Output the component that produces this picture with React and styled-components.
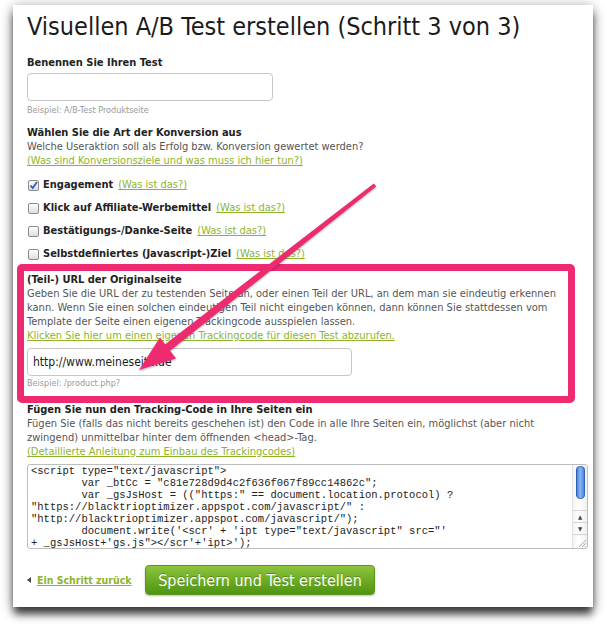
import React from 'react';
import styled, { createGlobalStyle } from 'styled-components';

const SANS = `"DejaVu Sans Condensed", "Liberation Sans", sans-serif`;
const MONO = `"Liberation Mono", "DejaVu Sans Mono", monospace`;
const PINK = '#ee2a70';
const GREEN = '#8db42c';

const GlobalStyle = createGlobalStyle`
  html, body {
    margin: 0;
    padding: 0;
    background: #ffffff;
  }
  body {
    font-family: ${SANS};
  }
`;

const Page = styled.div`
  width: 607px;
  height: 624px;
  overflow: hidden;
  box-sizing: border-box;
  padding: 5px 0 0 13px;
`;

const Sheet = styled.div`
  position: relative;
  width: 580px;
  height: 602px;
  box-sizing: border-box;
  padding: 8px 5px 0 14px;
  background: #ffffff;
  box-shadow:
    0 8px 8px -1px rgba(0, 0, 0, 0.7),
    0 2px 12px rgba(0, 0, 0, 0.4);
`;

const Title = styled.h1`
  margin: 0;
  font-size: 25px;
  line-height: 28px;
  font-weight: normal;
  color: #1b1b1b;
  white-space: nowrap;
`;

const Label = styled.div`
  margin-top: ${p => p.$top || 0}px;
  font-size: 11px;
  line-height: 14px;
  font-weight: bold;
  color: #222;
`;

const Desc = styled.div`
  font-size: 11px;
  line-height: 14px;
  color: #555;
  white-space: nowrap;
`;

const TextLink = styled.a`
  color: ${GREEN};
  text-decoration: underline;
  font-weight: ${p => (p.$bold ? 'bold' : 'normal')};
  cursor: pointer;
`;

const TextInput = styled.input`
  display: block;
  width: ${p => p.$width}px;
  height: 28px;
  margin-top: ${p => p.$top}px;
  box-sizing: border-box;
  border: 1px solid #c6c6c6;
  border-radius: 4px;
  padding: 0 5px;
  font-family: ${SANS};
  font-size: 12px;
  color: #222;
  background: #fff;
  outline: none;
`;

const Hint = styled.div`
  margin-top: ${p => p.$top}px;
  font-size: 9px;
  line-height: 12px;
  color: #9a9a9a;
`;

const CheckList = styled.div`
  margin-top: 10px;
  display: flex;
  flex-direction: column;
  gap: 9px;
`;

const CheckRow = styled.div`
  display: flex;
  align-items: center;
  gap: 4px;
  font-size: 11px;
  line-height: 14px;
  white-space: nowrap;
`;

const CheckName = styled.span`
  font-weight: bold;
  color: #222;
  margin-right: 1px;
`;

const Box = styled.span`
  display: inline-flex;
  align-items: center;
  justify-content: center;
  width: 9px;
  height: 9px;
  margin-left: 1px;
  border: 1px solid #8c8c8c;
  border-radius: 2px;
  background: linear-gradient(#ffffff, #dedede);
`;

const Highlight = styled.section`
  margin: 3px 13px 0 -10px;
  border: 7px solid ${PINK};
  border-radius: 5px;
  padding: 2px 3px 7px 3px;
`;

const CodeBox = styled.div`
  display: flex;
  height: 85px;
  margin-top: 5px;
  box-sizing: border-box;
  border: 1px solid #bdbdbd;
  border-radius: 3px;
  overflow: hidden;
`;

const CodeText = styled.pre`
  flex: 1;
  margin: 0;
  padding: 0 3px;
  overflow: hidden;
  font-family: ${MONO};
  font-size: 10.5px;
  line-height: 12px;
  color: #222;
  tab-size: 8;
`;

const ScrollBar = styled.div`
  width: 14px;
  display: flex;
  flex-direction: column;
  align-items: center;
  background: linear-gradient(90deg, #f4f4f4, #ffffff 40%, #f0f0f0);
  border-left: 1px solid #e2e2e2;
`;

const Thumb = styled.div`
  width: 9px;
  height: 33px;
  margin-top: 1px;
  border-radius: 5px;
  background: linear-gradient(90deg, #2f6fd0, #8cb6f2 45%, #3b78d6);
  box-shadow: inset 0 0 0 1px rgba(30, 70, 150, 0.5);
`;

const Gutter = styled.div`
  flex: 1;
`;

const ArrowBtn = styled.div`
  width: 100%;
  height: 11px;
  border-top: 1px solid #d6d6d6;
  font-size: 6px;
  line-height: 11px;
  text-align: center;
  color: #444;
`;

const Grip = styled.div`
  width: 100%;
  height: 13px;
  border-top: 1px solid #d6d6d6;
  display: flex;
  align-items: flex-end;
  justify-content: flex-end;
`;

const Footer = styled.div`
  display: flex;
  align-items: center;
  margin-top: 16px;
`;

const Back = styled.div`
  display: flex;
  align-items: center;
  gap: 5px;
  width: 118px;
  font-size: 10.5px;
  line-height: 14px;
`;

const BackArrow = styled.span`
  width: 0;
  height: 0;
  border-top: 3px solid transparent;
  border-bottom: 3px solid transparent;
  border-right: 4px solid #444;
  margin-right: 1px;
`;

const SaveButton = styled.button`
  width: 230px;
  height: 30px;
  border: 1px solid #5d9419;
  border-radius: 4px;
  background: linear-gradient(#8ec43e, #6aaa22 55%, #4f9414);
  color: #fff;
  font-family: ${SANS};
  font-size: 16px;
  text-shadow: 0 -1px 0 rgba(0, 0, 0, 0.25);
  box-shadow: 0 1px 2px rgba(0, 0, 0, 0.25);
  cursor: pointer;
`;

const Overlay = styled.svg`
  position: absolute;
  left: 0;
  top: 0;
  pointer-events: none;
  filter: drop-shadow(0 1px 1px rgba(0, 0, 0, 0.3));
`;

const Check = ({ checked }) => (
  <Box>
    {checked && (
      <svg width="9" height="9" viewBox="0 0 9 9">
        <path d="M1.5 4.5 L3.7 7 L8 1" fill="none" stroke="#2c5fb8" strokeWidth="1.8" />
      </svg>
    )}
  </Box>
);

const goals = [
  { name: 'Engagement', checked: true },
  { name: 'Klick auf Affiliate-Werbemittel' },
  { name: 'Bestätigungs-/Danke-Seite' },
  { name: 'Selbstdefiniertes (Javascript-)Ziel' },
];

const code = `<script type="text/javascript">
\tvar _btCc = "c81e728d9d4c2f636f067f89cc14862c";
\tvar _gsJsHost = (("https:" == document.location.protocol) ?
"https://blacktrioptimizer.appspot.com/javascript/" :
"http://blacktrioptimizer.appspot.com/javascript/");
\tdocument.write('<scr' + 'ipt type="text/javascript" src="'
+ _gsJsHost+'gs.js"></scr'+'ipt>');`;

export default function App() {
  return (
    <>
      <GlobalStyle />
      <Page>
        <Sheet>
          <Title>Visuellen A/B Test erstellen (Schritt 3 von 3)</Title>

          <Label $top={15}>Benennen Sie Ihren Test</Label>
          <TextInput $width={246} $top={3} defaultValue="" />
          <Hint $top={3}>Beispiel: A/B-Test Produktseite</Hint>

          <Label $top={10}>Wählen Sie die Art der Konversion aus</Label>
          <Desc>Welche Useraktion soll als Erfolg bzw. Konversion gewertet werden?</Desc>
          <Desc>
            <TextLink>(Was sind Konversionsziele und was muss ich hier tun?)</TextLink>
          </Desc>

          <CheckList>
            {goals.map(g => (
              <CheckRow key={g.name}>
                <Check checked={g.checked} />
                <CheckName>{g.name}</CheckName>
                <TextLink>(Was ist das?)</TextLink>
              </CheckRow>
            ))}
          </CheckList>

          <Highlight>
            <Label>(Teil-) URL der Originalseite</Label>
            <Desc>
              Geben Sie die URL der zu testenden Seite an, oder einen Teil der URL, an dem man sie eindeutig erkennen
              <br />
              kann. Wenn Sie einen solchen eindeutigen Teil nicht eingeben können, dann können Sie stattdessen vom
              <br />
              Template der Seite einen eigenen Trackingcode ausspielen lassen.
            </Desc>
            <Desc>
              <TextLink>Klicken Sie hier um einen eigenen Trackingcode für diesen Test abzurufen.</TextLink>
            </Desc>
            <TextInput $width={325} $top={5} defaultValue="http://www.meineseite.de" />
            <Hint $top={1}>Beispiel: /product.php?</Hint>
          </Highlight>

          <Label>Fügen Sie nun den Tracking-Code in Ihre Seiten ein</Label>
          <Desc>
            Fügen Sie (falls das nicht bereits geschehen ist) den Code in alle Ihre Seiten ein, möglichst (aber nicht
            <br />
            zwingend) unmittelbar hinter dem öffnenden &lt;head&gt;-Tag.
          </Desc>
          <Desc>
            <TextLink>(Detaillierte Anleitung zum Einbau des Trackingcodes)</TextLink>
          </Desc>

          <CodeBox>
            <CodeText>{code}</CodeText>
            <ScrollBar>
              <Thumb />
              <Gutter />
              <ArrowBtn>▲</ArrowBtn>
              <ArrowBtn>▼</ArrowBtn>
              <Grip>
                <svg width="10" height="10" viewBox="0 0 10 10">
                  <path d="M9 2 L2 9 M9 5 L5 9 M9 8 L8 9" stroke="#999" strokeWidth="0.8" />
                </svg>
              </Grip>
            </ScrollBar>
          </CodeBox>

          <Footer>
            <Back>
              <BackArrow />
              <TextLink $bold>Ein Schritt zurück</TextLink>
            </Back>
            <SaveButton>Speichern und Test erstellen</SaveButton>
          </Footer>

          <Overlay width="580" height="602" viewBox="13 5 580 602">
            <polygon
              points="376.1,186.6 373.9,183.4 164.6,344.8 169.4,351.2"
              fill={PINK}
            />
            <polygon points="139,370 176,358.5 160,337.5" fill={PINK} />
          </Overlay>
        </Sheet>
      </Page>
    </>
  );
}
